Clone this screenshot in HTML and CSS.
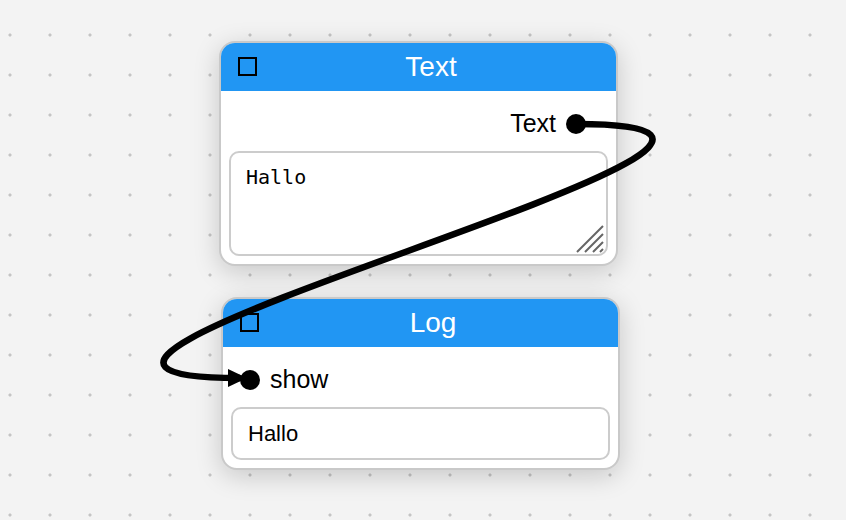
FILE: index.html
```html
<!DOCTYPE html>
<html lang="de">
<head>
<meta charset="utf-8">
<title>Node Editor</title>
<link rel="stylesheet" href="styles.css">
</head>
<body>
<div class="canvas">
  <div class="node node-text">
    <div class="node-header"><span class="check"></span><span class="title">Text</span></div>
    <div class="node-body">
      <div class="port-row port-out"><span class="port-label">Text</span><span class="port-dot"></span></div>
      <div class="text-wrap">
        <textarea class="text-input" spellcheck="false">Hallo</textarea>
        <svg class="grip" width="30" height="30" viewBox="0 0 30 30"><path d="M2 28 L28 2 M10 28 L28 10 M18 28 L28 18 M25 28 L28 25" stroke="#666" stroke-width="2" fill="none"/></svg>
      </div>
    </div>
  </div>
  <div class="node node-log">
    <div class="node-header"><span class="check"></span><span class="title">Log</span></div>
    <div class="node-body">
      <div class="port-row port-in"><span class="port-dot"></span><span class="port-label">show</span></div>
      <div class="output">Hallo</div>
    </div>
  </div>
  <svg class="wires" width="846" height="520" viewBox="0 0 846 520">
    <path d="M576 124 C938 124, -122 378, 240 378" stroke="#000" stroke-width="6.5" fill="none"/>
    <polygon points="228,369 247,378 228,387" fill="#000"/>
  </svg>
</div>
</body>
</html>
```
FILE: styles.css
```css
html, body {
  margin: 0;
  padding: 0;
}
body {
  font-family: "Liberation Sans", Arial, sans-serif;
  color: #000;
}
.canvas {
  position: relative;
  width: 846px;
  height: 520px;
  overflow: hidden;
  background-color: #f3f3f3;
  background-image: radial-gradient(circle, #c4c4c4 1.2px, rgba(196,196,196,0) 1.9px);
  background-size: 40px 40px;
  background-position: -10px 15px;
}
.node {
  position: absolute;
  width: 399px;
  box-sizing: border-box;
  background: #fff;
  border: 2px solid #c9c9c9;
  border-radius: 16px;
  overflow: hidden;
  box-shadow: 0 6px 26px rgba(0,0,0,0.18);
}
.node-text { left: 219px; top: 41px; }
.node-log { left: 221px; top: 297px; }
.node-header {
  height: 48px;
  background: #2196f3;
  display: flex;
  align-items: center;
  padding-left: 17px;
}
.check {
  width: 19px;
  height: 19px;
  box-sizing: border-box;
  border: 2px solid #000;
  margin-top: -1px;
}
.title {
  flex: 1;
  text-align: center;
  color: #fff;
  font-size: 28px;
  margin-right: 11px;
}
.node-body {
  padding: 0 8px 8px;
}
.port-row {
  height: 60px;
  box-sizing: border-box;
  padding-top: 5px;
  display: flex;
  align-items: center;
  gap: 10px;
}
.port-out {
  justify-content: flex-end;
  padding-right: 22px;
}
.port-in {
  padding-left: 9px;
}
.port-label {
  font-size: 25px;
}
.port-dot {
  width: 20px;
  height: 20px;
  border-radius: 50%;
  background: #000;
}
.text-wrap {
  position: relative;
  height: 105px;
}
.text-input {
  display: block;
  width: 100%;
  height: 105px;
  box-sizing: border-box;
  margin: 0;
  border: 2px solid #cccccc;
  border-radius: 10px;
  padding: 12px 14px 12px 15px;
  font-family: "DejaVu Sans Mono", monospace;
  font-size: 20px;
  color: #000;
  background: #fff;
  resize: none;
  outline: none;
}
.grip {
  position: absolute;
  right: 3px;
  bottom: 2px;
}
.output {
  height: 53px;
  box-sizing: border-box;
  border: 2px solid #cccccc;
  border-radius: 10px;
  padding-left: 15px;
  display: flex;
  align-items: center;
  font-size: 22px;
}
.wires {
  position: absolute;
  left: 0;
  top: 0;
  pointer-events: none;
}
```
